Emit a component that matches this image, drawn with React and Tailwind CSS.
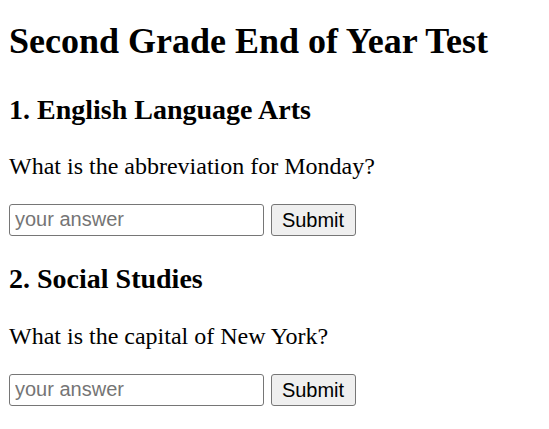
import React from 'react';

const questions = [
    { id: 1, title: '1. English Language Arts', prompt: 'What is the abbreviation for Monday?' },
    { id: 2, title: '2. Social Studies', prompt: 'What is the capital of New York?' },
];

const sans = { fontFamily: '"Liberation Sans", Arial, sans-serif' };

const App = () => {
    return (
        <div className="pl-[9px] pr-4 pt-[21px] text-black bg-white" style={{ fontFamily: '"Liberation Serif", "Times New Roman", serif' }}>
            <h1 className="text-[36px] font-bold leading-[41px] mb-[31.5px]">Second Grade End of Year Test</h1>
            {questions.map(q => (
                <div key={q.id}>
                    <h2 className="text-[28px] font-bold leading-[32px] mb-[26.4px]">{q.title}</h2>
                    <p className="text-[24px] leading-[28px] mb-[24.1px]">{q.prompt}</p>
                    <form className="flex items-center gap-[6.5px] mb-[27.5px]" onSubmit={(e) => e.preventDefault()}>
                        <input
                            type="text"
                            placeholder="your answer"
                            className="w-[255px] h-[32px] px-[5px] border border-[#767676] rounded-[3px] text-[20px] placeholder:text-[#757575] bg-white outline-none"
                            style={sans}
                        />
                        <button
                            type="submit"
                            className="w-[85px] h-[32px] border border-[#767676] rounded-[3px] bg-[#efefef] text-[20px] text-black text-center"
                            style={sans}
                        >
                            Submit
                        </button>
                    </form>
                </div>
            ))}
        </div>
    );
};

export default App;
